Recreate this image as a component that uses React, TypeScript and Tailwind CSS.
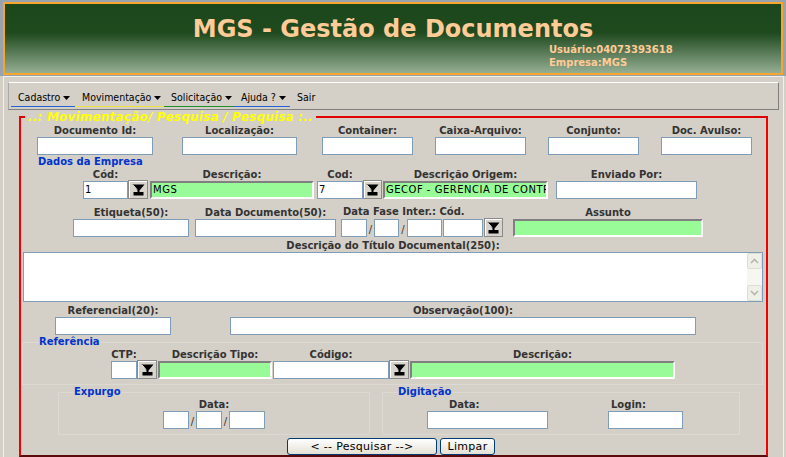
import React from "react";

const Lbl = ({ children, className = "" }: { children?: React.ReactNode; className?: string }) => (
  <div className={"h-[12px] leading-[12px] text-[10px] font-bold text-[#333333] whitespace-nowrap " + className}>{children}</div>
);

const Box = ({ children, className = "w-full" }: { children?: React.ReactNode; className?: string }) => (
  <div className={"h-[18px] border border-[#7f9db9] bg-white pl-[1px] text-[10px] leading-[16px] tracking-[0.5px] text-black whitespace-nowrap overflow-hidden " + className}>
    {children}
  </div>
);

const Green = ({ children }: { children?: React.ReactNode }) => (
  <div className="h-[18px] w-full border-2 border-t-[#808080] border-l-[#808080] border-b-white border-r-white bg-[#98fb98] pl-[1px] text-[10px] leading-[14px] tracking-[0.5px] text-black whitespace-nowrap overflow-hidden">
    {children}
  </div>
);

const Col = ({ label, className, children }: { label: string; className: string; children: React.ReactNode }) => (
  <div className={"flex flex-col items-center " + className}>
    <Lbl>{label}</Lbl>
    {children}
  </div>
);

const Funnel = () => (
  <svg width="13" height="12" viewBox="0 0 13 12">
    <path d="M0.5 0.5 H12.5 L7.5 6.5 V8 H11.5 V11.5 H1.5 V8 H5.5 V6.5 Z" fill="#000" />
    <path d="M1.2 1.2 L5 5.6" stroke="#ffffff" strokeWidth="1" />
  </svg>
);

const Drop = ({ className }: { className: string }) => (
  <div className={"h-[19px] border border-[#8a8a8a] bg-[#d8d4cc] shadow-[inset_1px_1px_0_#ffffff] flex items-center justify-center " + className}>
    <Funnel />
  </div>
);

const Slash = ({ className }: { className: string }) => (
  <div className={"h-[18px] flex items-end justify-center text-[10px] leading-[14px] text-[#333333] " + className}>/</div>
);

const Arrow = () => (
  <svg width="7" height="4" viewBox="0 0 7 4" className="ml-[3px]">
    <path d="M0 0H7L3.5 4Z" fill="#000" />
  </svg>
);

const Chevron = ({ up }: { up?: boolean }) => (
  <svg width="9" height="6" viewBox="0 0 9 6">
    <path d={up ? "M1 5 L4.5 1.5 L8 5" : "M1 1 L4.5 4.5 L8 1"} stroke="#b4b8ac" strokeWidth="1.6" fill="none" />
  </svg>
);

export default function App() {
  return (
    <div className="w-[786px] h-[457px] overflow-hidden bg-[#d4d0c8] font-['DejaVu_Sans',sans-serif]">
      {/* Header */}
      <div className="bg-[#97a3ae] px-[3px] pt-[2px] pb-[1px]">
        <div className="h-[73px] border-2 border-[#f7a52c] bg-[linear-gradient(to_bottom,#1c461b_0%,#1f4a1e_42%,#95ae93_100%)]">
          <div className="mt-[11px] text-center text-[24px] leading-[28px] font-bold text-[#ffcb96]">MGS - Gestão de Documentos</div>
          <div className="mt-[1px] pl-[544px] text-[10px] leading-[12px] font-bold text-[#ffcb96]">
            <div>Usuário:04073393618</div>
            <div className="mt-[1px]">Empresa:MGS</div>
          </div>
        </div>
      </div>

      {/* Panel */}
      <div className="ml-[3px] w-[781px] h-[381px] border-l border-t border-r border-[#f2f0ea]">
        {/* Menu */}
        <div className="ml-[4px] mt-[5px] w-[771px] h-[28px] border border-t-white border-l-[#a8a8a8] border-r-[#808080] border-b-[#808080] pl-[2px] pt-[3px] flex items-start font-['DejaVu_Sans_Condensed','DejaVu_Sans',sans-serif] text-[10.5px] text-black">
          <div className="w-[64px] h-[21px] border-b border-[#2462d8] pl-[7px] pt-[3px] flex items-center">Cadastro<Arrow /></div>
          <div className="w-[89px] h-[21px] border-b border-[#ece23c] pl-[7px] pt-[3px] flex items-center">Movimentação<Arrow /></div>
          <div className="w-[70px] h-[21px] border-b border-[#22902a] pl-[7px] pt-[3px] flex items-center">Solicitação<Arrow /></div>
          <div className="w-[56px] h-[21px] border-b border-[#2462d8] pl-[7px] pt-[3px] flex items-center">Ajuda ?<Arrow /></div>
          <div className="h-[21px] pl-[7px] pt-[3px] flex items-center">Sair</div>
        </div>

        {/* Main fieldset */}
        <fieldset className="ml-[15px] w-[749px] border-2 border-[#f00000] border-t-[#e00000] border-b-[#5a0a0a]">
          <legend className="ml-[4px] px-[3px] text-[12px] leading-[14px] tracking-[0.2px] italic font-bold text-[#ffff00]">..: Movimentação/ Pesquisa / Pesquisa :..</legend>

          {/* Row 1 */}
          <div className="flex mt-[1px]">
            <Col label="Documento Id:" className="ml-[16px] w-[116px]"><Box /></Col>
            <Col label="Localização:" className="ml-[29px] w-[115px]"><Box /></Col>
            <Col label="Container:" className="ml-[25px] w-[91px]"><Box /></Col>
            <Col label="Caixa-Arquivo:" className="ml-[22px] w-[91px]"><Box /></Col>
            <Col label="Conjunto:" className="ml-[22px] w-[91px]"><Box /></Col>
            <Col label="Doc. Avulso:" className="ml-[22px] w-[91px]"><Box /></Col>
          </div>

          <div className="mt-[1px] ml-[17px] h-[12px] leading-[12px] text-[10px] font-bold text-[#0033cc]">Dados da Empresa</div>

          {/* Row 2 */}
          <div className="flex items-end mt-[1px]">
            <Col label="Cód:" className="ml-[62px] w-[45px]"><Box>1</Box></Col>
            <Drop className="w-[20px]" />
            <Col label="Descrição:" className="ml-[2px] w-[164px]"><Green>MGS</Green></Col>
            <Col label="Cod:" className="ml-[3px] w-[46px]"><Box>7</Box></Col>
            <Drop className="w-[19px]" />
            <Col label="Descrição Origem:" className="ml-[1px] w-[165px]"><Green>GECOF - GERENCIA DE CONTROLE</Green></Col>
            <Col label="Enviado Por:" className="ml-[8px] w-[141px]"><Box /></Col>
          </div>

          {/* Row 3 */}
          <div className="flex items-end mt-[7px]">
            <Col label="Etiqueta(50):" className="ml-[52px] w-[116px]"><Box /></Col>
            <Col label="Data Documento(50):" className="ml-[6px] w-[141px]"><Box /></Col>
            <div className="ml-[5px] flex flex-col items-start">
              <Lbl className="ml-[2px]">Data Fase Inter.: Cód.</Lbl>
              <div className="flex items-end">
                <Box className="w-[26px]" />
                <Slash className="w-[7px]" />
                <Box className="w-[25px]" />
                <Slash className="w-[8px]" />
                <Box className="w-[35px]" />
                <Box className="ml-[1px] w-[40px]" />
                <Drop className="ml-[1px] w-[19px]" />
              </div>
            </div>
            <Col label="Assunto" className="ml-[10px] w-[190px]"><Green /></Col>
          </div>

          {/* Row 4 */}
          <div className="mt-[3px] ml-[2px] w-[740px] flex flex-col items-center">
            <Lbl>Descrição do Título Documental(250):</Lbl>
            <div className="w-full h-[50px] border border-[#7f9db9] bg-white flex justify-end">
              <div className="w-[15px] h-full bg-[#f7f7f2] flex flex-col justify-between">
                <div className="h-[16px] border border-[#dcdfd2] rounded-[2px] bg-[#eff0e8] flex items-center justify-center"><Chevron up /></div>
                <div className="h-[16px] border border-[#dcdfd2] rounded-[2px] bg-[#eff0e8] flex items-center justify-center"><Chevron /></div>
              </div>
            </div>
          </div>

          {/* Row 5 */}
          <div className="flex mt-[3px]">
            <Col label="Referencial(20):" className="ml-[34px] w-[116px]"><Box /></Col>
            <Col label="Observação(100):" className="ml-[59px] w-[466px]"><Box /></Col>
          </div>

          {/* Referência */}
          <fieldset className="mt-[1px] ml-[1px] w-[741px] border border-[#dcd9d2] pb-[5px]">
            <legend className="ml-[16px] text-[10px] leading-[12px] font-bold text-[#0033cc]">Referência</legend>
            <div className="flex items-end mt-[1px]">
              <Col label="CTP:" className="ml-[88px] w-[26px]"><Box /></Col>
              <Drop className="w-[20px]" />
              <Col label="Descrição Tipo:" className="ml-[1px] w-[114px]"><Green /></Col>
              <Col label="Código:" className="ml-[1px] w-[116px]"><Box /></Col>
              <Drop className="w-[20px]" />
              <Col label="Descrição:" className="ml-[1px] w-[265px]"><Green /></Col>
            </div>
          </fieldset>

          {/* Expurgo / Digitação */}
          <div className="flex mt-[1px]">
            <fieldset className="ml-[37px] w-[312px] border border-[#dcd9d2] pb-[5px]">
              <legend className="ml-[15px] text-[10px] leading-[12px] font-bold text-[#0033cc]">Expurgo</legend>
              <div className="mt-[1px] ml-[104px] w-[102px] flex flex-col items-center">
                <Lbl>Data:</Lbl>
                <div className="flex">
                  <Box className="w-[26px]" />
                  <Slash className="w-[7px]" />
                  <Box className="w-[26px]" />
                  <Slash className="w-[7px]" />
                  <Box className="w-[36px]" />
                </div>
              </div>
            </fieldset>
            <fieldset className="ml-[12px] w-[358px] border border-[#dcd9d2] pb-[5px]">
              <legend className="ml-[15px] text-[10px] leading-[12px] font-bold text-[#0033cc]">Digitação</legend>
              <div className="mt-[1px] flex">
                <div className="ml-[44px] flex flex-col">
                  <Lbl className="ml-[22px]">Data:</Lbl>
                  <Box className="w-[121px]" />
                </div>
                <div className="ml-[60px] flex flex-col">
                  <Lbl className="ml-[3px]">Login:</Lbl>
                  <Box className="w-[75px]" />
                </div>
              </div>
            </fieldset>
          </div>

          {/* Buttons */}
          <div className="flex mt-[3px] ml-[266px]">
            <div className="w-[150px] h-[17px] rounded-[3px] border border-[#003c74] bg-linear-to-b from-white to-[#e4e1d4] flex items-center justify-center text-[11px] leading-[13px] tracking-[0.3px] text-black">&lt; -- Pesquisar --&gt;</div>
            <div className="ml-[3px] w-[55px] h-[17px] rounded-[3px] border border-[#003c74] bg-linear-to-b from-white to-[#e4e1d4] flex items-center justify-center text-[11px] leading-[13px] tracking-[0.3px] text-black">Limpar</div>
          </div>
        </fieldset>
      </div>
    </div>
  );
}
